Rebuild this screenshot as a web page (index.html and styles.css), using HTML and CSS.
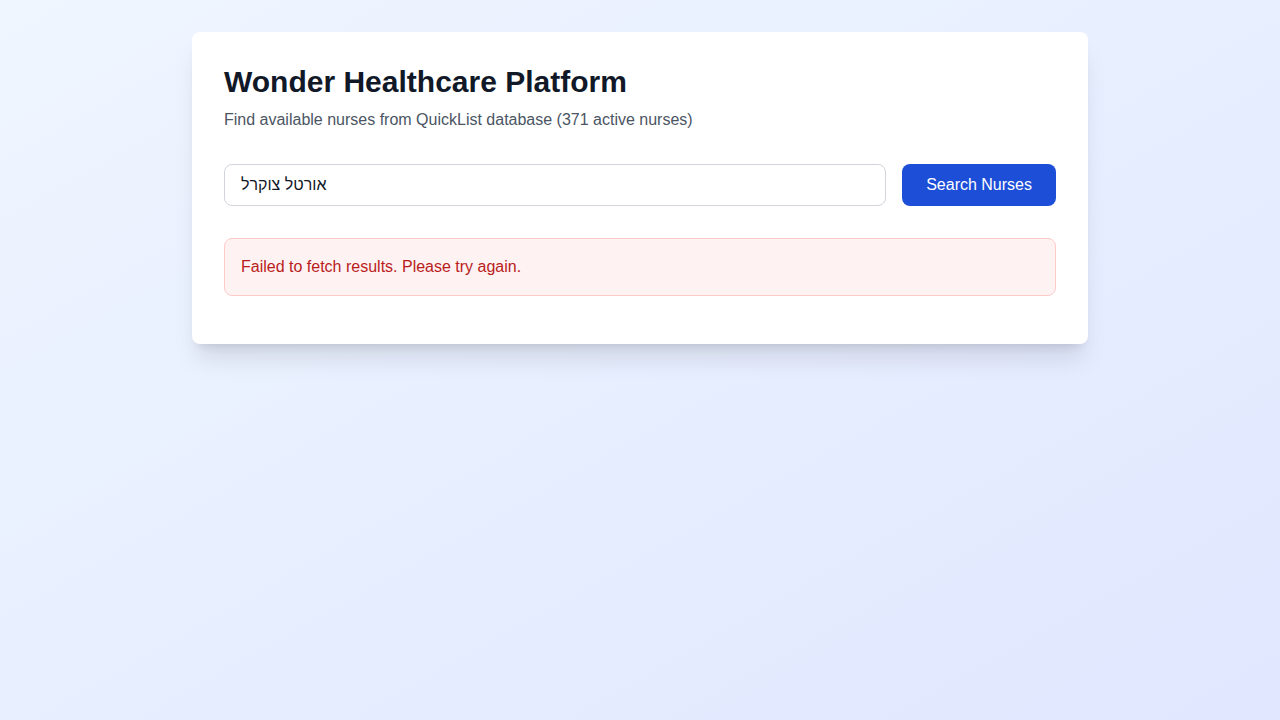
FILE: index.html
```html
<!DOCTYPE html>
<html lang="en">
<head>
<meta charset="utf-8">
<title>Wonder Healthcare Platform</title>
<link rel="stylesheet" href="styles.css">
</head>
<body>
<main class="page">
  <section class="card">
    <h1 class="title">Wonder Healthcare Platform</h1>
    <p class="subtitle">Find available nurses from QuickList database (371 active nurses)</p>
    <form class="search">
      <input class="search-input" type="text" value="אורטל צוקרל">
      <button class="search-btn" type="button">Search Nurses</button>
    </form>
    <div class="error">Failed to fetch results. Please try again.</div>
  </section>
</main>
</body>
</html>
```
FILE: styles.css
```css
* { box-sizing: border-box; }
html, body { margin: 0; padding: 0; }
body {
  min-height: 720px;
  background: linear-gradient(to bottom right, #eff6ff, #e0e7ff);
  font-family: "Liberation Sans", Arial, "Noto Sans", sans-serif;
  color: #111827;
}
.page {
  padding: 32px 16px;
  display: flex;
  justify-content: center;
}
.card {
  width: 896px;
  background: #ffffff;
  border-radius: 8px;
  box-shadow: 0 20px 25px -5px rgba(0,0,0,0.1), 0 8px 10px -6px rgba(0,0,0,0.1);
  padding: 32px 32px 48px;
}
.title {
  margin: 0 0 8px;
  font-size: 30px;
  line-height: 36px;
  font-weight: 700;
  color: #111827;
}
.subtitle {
  margin: 0 0 32px;
  font-size: 16px;
  line-height: 24px;
  color: #4b5563;
}
.search {
  display: flex;
  gap: 16px;
  margin: 0 0 32px;
}
.search-input {
  flex: 1;
  height: 42px;
  padding: 8px 16px;
  border: 1px solid #d1d5db;
  border-radius: 8px;
  font-family: inherit;
  font-size: 16px;
  line-height: 24px;
  color: #111827;
  background: #fff;
  outline: none;
}
.search-btn {
  height: 42px;
  padding: 8px 24px;
  border: none;
  border-radius: 8px;
  background: #1d4ed8;
  color: #ffffff;
  font-family: inherit;
  font-size: 16px;
  line-height: 24px;
  cursor: pointer;
}
.error {
  padding: 16px;
  border: 1px solid #fecaca;
  border-radius: 8px;
  background: #fef2f2;
  color: #b91c1c;
  font-size: 16px;
  line-height: 24px;
}
```
